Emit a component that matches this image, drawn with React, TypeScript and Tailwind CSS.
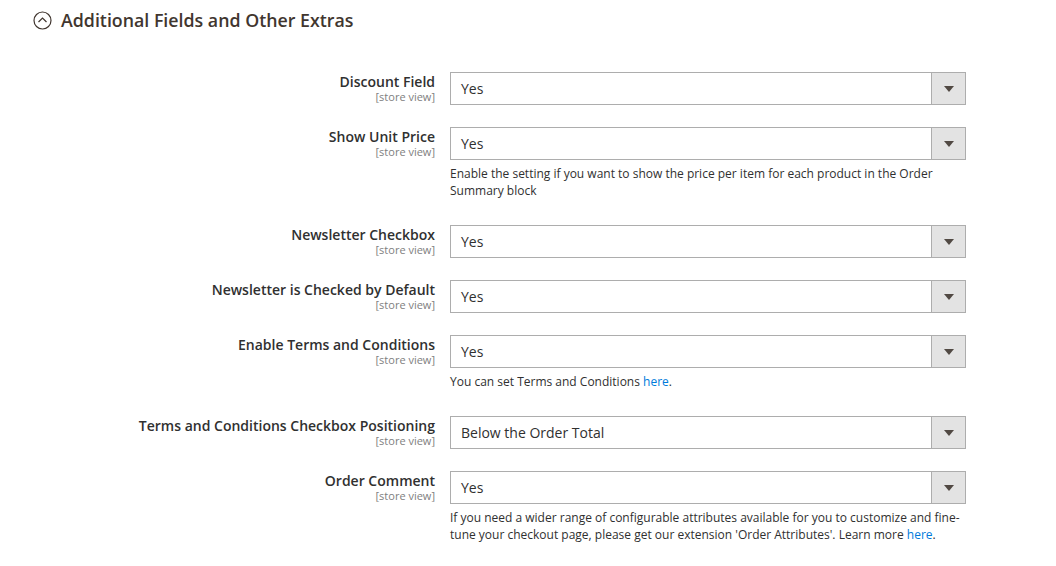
import { ReactNode } from "react";

interface FieldProps {
  label: string;
  value: string;
  note?: ReactNode;
}

function SelectBox({ value }: { value: string }) {
  return (
    <div className="flex h-[33px] w-[516px] border border-[#adadad] bg-white">
      <div className="flex flex-1 items-center pl-[10px] text-[14px] text-[#303030]">{value}</div>
      <div className="flex w-[34px] items-center justify-center border-l border-[#adadad] bg-[#e3e3e3]">
        <svg width="10" height="6" viewBox="0 0 10 6">
          <path d="M0 0 H10 L5 6 Z" fill="#514943" />
        </svg>
      </div>
    </div>
  );
}

function Field({ label, value, note }: FieldProps) {
  return (
    <div className="flex">
      <div className="w-[435px] pt-[1px] text-right">
        <div className="text-[14px] font-semibold leading-[18px] text-[#303030]">{label}</div>
        <div className="text-[11px] leading-[12px] text-[#808080]">[store view]</div>
      </div>
      <div className="ml-[15px] w-[516px]">
        <SelectBox value={value} />
        {note && (
          <div className="mb-[4px] mt-[5px] text-[12px] leading-[17px] text-[#303030]">{note}</div>
        )}
      </div>
    </div>
  );
}

export default function App() {
  return (
    <div className="min-h-[566px] bg-white" style={{ fontFamily: '"Open Sans", "Liberation Sans", sans-serif' }}>
      <div className="flex items-center pl-[33px] pt-[9px]">
        <svg width="19" height="19" viewBox="0 0 19 19">
          <circle cx="9.5" cy="9.5" r="8.5" fill="none" stroke="#41362f" strokeWidth="1.2" />
          <path d="M5.5 11 L9.5 7 L13.5 11" fill="none" stroke="#41362f" strokeWidth="1.2" />
        </svg>
        <h2 className="ml-[9px] text-[17.8px] font-semibold leading-[22px] text-[#41362f]">
          Additional Fields and Other Extras
        </h2>
      </div>
      <div className="mt-[41px] flex flex-col gap-[22px]">
        <Field label="Discount Field" value="Yes" />
        <Field
          label="Show Unit Price"
          value="Yes"
          note="Enable the setting if you want to show the price per item for each product in the Order Summary block"
        />
        <Field label="Newsletter Checkbox" value="Yes" />
        <Field label="Newsletter is Checked by Default" value="Yes" />
        <Field
          label="Enable Terms and Conditions"
          value="Yes"
          note={
            <>
              You can set Terms and Conditions <a className="text-[#007bdb]">here</a>.
            </>
          }
        />
        <Field label="Terms and Conditions Checkbox Positioning" value="Below the Order Total" />
        <Field
          label="Order Comment"
          value="Yes"
          note={
            <>
              If you need a wider range of configurable attributes available for you to customize and fine-tune your
              checkout page, please get our extension 'Order Attributes'. Learn more{" "}
              <a className="text-[#007bdb]">here</a>.
            </>
          }
        />
      </div>
    </div>
  );
}
